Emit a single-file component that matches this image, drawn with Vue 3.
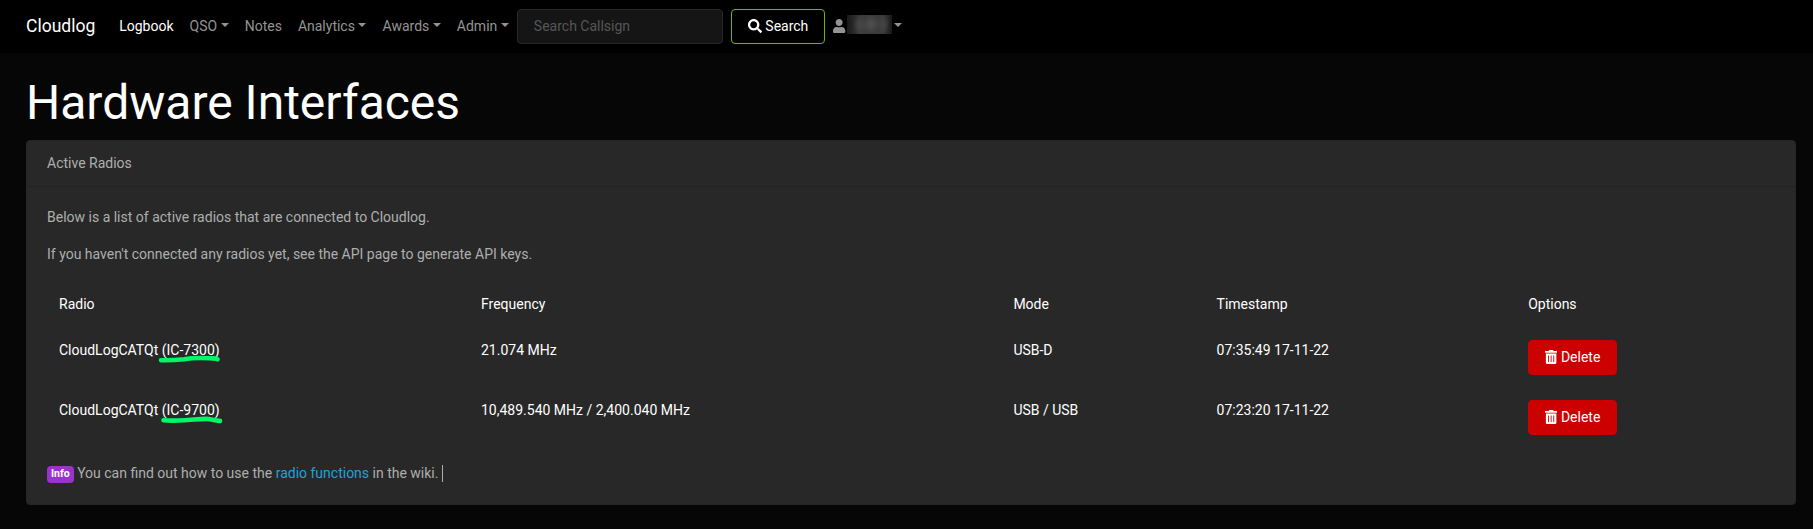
<script setup>
const links = [
  { label: 'Logbook', active: true },
  { label: 'QSO', menu: true },
  { label: 'Notes' },
  { label: 'Analytics', menu: true },
  { label: 'Awards', menu: true },
  { label: 'Admin', menu: true },
]
const radios = [
  {
    name: 'CloudLogCATQt',
    model: '(IC-7300)',
    frequency: '21.074 MHz',
    mode: 'USB-D',
    time: '07:35:49 17-11-22',
    mark: 'M3 6.2 C12 6.500 19 6 26 5.200 C34 3.800 44 3.900 52 4.300 C55 4.500 58 4 59.500 5.200',
  },
  {
    name: 'CloudLogCATQt',
    model: '(IC-9700)',
    frequency: '10,489.540 MHz / 2,400.040 MHz',
    mode: 'USB / USB',
    time: '07:23:20 17-11-22',
    mark: 'M5.5 6.200 C14 7.100 22 6.400 30 6 C37 5.600 45 4.500 51 5 C54 5.600 57 6.600 62 6.900',
  },
]
</script>

<template>
  <div class="page">
    <nav class="navbar">
      <a class="brand">Cloudlog</a>
      <a v-for="l in links" :key="l.label" class="link" :class="{ active: l.active, menu: l.menu }">{{ l.label }}</a>
      <input class="search" type="text" placeholder="Search Callsign" />
      <button class="btn btn-search">
        <svg class="icon" viewBox="0 0 512 512"><path d="M505 442.7L405.3 343c-4.500-4.500-10.600-7-17-7H372c27.600-35.300 44-79.700 44-128C416 93.100 322.900 0 208 0S0 93.100 0 208s93.100 208 208 208c48.300 0 92.700-16.400 128-44v16.300c0 6.400 2.500 12.500 7 17l99.700 99.700c9.400 9.400 24.600 9.400 33.900 0l28.300-28.300c9.400-9.400 9.400-24.600.1-34zM208 336c-70.700 0-128-57.200-128-128 0-70.700 57.200-128 128-128 70.700 0 128 57.200 128 128 0 70.700-57.200 128-128 128z" /></svg>
        Search
      </button>
      <a class="link user menu">
        <svg class="icon narrow" viewBox="0 0 448 512"><path d="M224 256c70.700 0 128-57.300 128-128S294.700 0 224 0 96 57.300 96 128s57.300 128 128 128zm89.600 32h-16.700c-22.200 10.200-46.900 16-72.900 16s-50.600-5.800-72.900-16h-16.700C60.200 288 0 348.200 0 422.400V464c0 26.500 21.500 48 48 48h352c26.500 0 48-21.500 48-48v-41.600c0-74.200-60.200-134.400-134.400-134.400z" /></svg>
        <span class="redacted"></span>
      </a>
    </nav>

    <main class="container">
      <h1>Hardware Interfaces</h1>
      <section class="card">
        <header class="card-header">Active Radios</header>
        <div class="card-body">
          <p>Below is a list of active radios that are connected to Cloudlog.</p>
          <p>If you haven't connected any radios yet, see the API page to generate API keys.</p>
          <div class="table">
            <div class="row">
              <span>Radio</span><span>Frequency</span><span>Mode</span><span>Timestamp</span><span>Options</span>
            </div>
            <div v-for="r in radios" :key="r.model" class="row">
              <span>{{ r.name }} <span class="model">{{ r.model }}<svg class="mark" viewBox="0 0 66 11"><path :d="r.mark" /></svg></span></span>
              <span>{{ r.frequency }}</span>
              <span>{{ r.mode }}</span>
              <span>{{ r.time }}</span>
              <span>
                <button class="btn btn-delete">
                  <svg class="icon narrow" viewBox="0 0 448 512"><path d="M32 464a48 48 0 0 0 48 48h288a48 48 0 0 0 48-48V128H32zm272-256a16 16 0 0 1 32 0v224a16 16 0 0 1-32 0zm-96 0a16 16 0 0 1 32 0v224a16 16 0 0 1-32 0zm-96 0a16 16 0 0 1 32 0v224a16 16 0 0 1-32 0zM432 32H312l-9.400-18.700A24 24 0 0 0 281.100 0H166.800a23.700 23.700 0 0 0-21.400 13.300L136 32H16A16 16 0 0 0 0 48v32a16 16 0 0 0 16 16h416a16 16 0 0 0 16-16V48a16 16 0 0 0-16-16z" /></svg>
                  Delete
                </button>
              </span>
            </div>
          </div>
          <p class="note"><span class="badge">Info</span> You can find out how to use the <a class="wiki">radio functions</a> in the wiki. <span class="caret"></span></p>
        </div>
      </section>
    </main>
  </div>
</template>

<style>
body {
  margin: 0;
  background: #060606;
}
</style>

<style scoped>
* {
  box-sizing: border-box;
}
.page {
  height: 529px;
  overflow: hidden;
  font: 14px/21px Roboto, sans-serif;
  color: #adafae;
}
.navbar {
  display: flex;
  align-items: center;
  height: 53px;
  padding-left: 26px;
  background: #000;
}
.brand {
  margin-right: 16px;
  margin-bottom: 1px;
  font-size: 17.5px;
  line-height: 26px;
  color: #fff;
}
.link {
  padding: 0 8px;
  color: #949494;
  white-space: nowrap;
}
.active {
  color: #fff;
}
.menu::after {
  content: '';
  display: inline-block;
  margin-left: 3.57px;
  vertical-align: 3.57px;
  border-top: 4.2px solid;
  border-left: 4.2px solid transparent;
  border-right: 4.2px solid transparent;
}
.search {
  width: 206px;
  height: 35px;
  margin-right: 8px;
  padding: 5px 16px 7px;
  border: 1px solid #282828;
  border-radius: 4px;
  background: #151515;
  font: inherit;
}
.search::placeholder {
  color: #555;
}
.btn {
  height: 35px;
  padding: 6px 16px;
  border: 1px solid;
  border-radius: 4px;
  font: inherit;
  color: #fff;
  white-space: nowrap;
}
.btn-search {
  background: #000;
  border-color: #77b300;
}
.btn-delete {
  display: block;
  background: #c00;
  border-color: #c00;
}
.icon {
  width: 14px;
  height: 14px;
  vertical-align: -1.75px;
  fill: currentColor;
}
.narrow {
  width: 12.25px;
}
.user {
  display: flex;
  align-items: center;
}
.user .icon {
  margin-bottom: 2px;
}
.user::after {
  margin-left: 2px;
  margin-bottom: 3px;
}
.redacted {
  width: 45px;
  height: 19px;
  margin: 0 0 4px 1.5px;
  background:
    radial-gradient(ellipse 7px 10px at 13px 10px, #484848, transparent),
    radial-gradient(ellipse 9px 10px at 24px 9px, #505050, transparent),
    radial-gradient(ellipse 7px 10px at 36px 9px, #454545, transparent),
    linear-gradient(90deg, #181818, #3b3b3b 30%, #3a3a3a 80%, #191919);
}
.container {
  padding: 21px 17px 0 26px;
}
h1 {
  margin: 0 0 8px;
  font-size: 48px;
  line-height: 58px;
  font-weight: 400;
  color: #fff;
}
.card {
  border: 1px solid #252525;
  border-radius: 4px;
  background: #282828;
}
.card-header {
  height: 46px;
  padding: 12px 20px;
  border-bottom: 1px solid #222;
}
.card-body {
  padding: 20px;
}
p {
  margin: 0 0 16px;
}
.table {
  margin-bottom: 16px;
  color: #fff;
}
.row {
  display: grid;
  grid-template-columns: 422px 532.4px 203.2px 311.6px 1fr;
  padding: 13px 12px 12px;
}
.model {
  position: relative;
}
.mark {
  position: absolute;
  left: -4px;
  top: 12px;
  width: 66px;
  height: 11px;
  fill: none;
  stroke: #00f866;
  stroke-width: 4.6;
  stroke-linecap: round;
  stroke-linejoin: round;
}
.note {
  height: 21px;
  margin: 0;
}
.badge {
  position: relative;
  top: -1px;
  display: inline-block;
  padding: 3px 4px;
  border-radius: 4px;
  background: #93c;
  font-size: 10.5px;
  line-height: 10.5px;
  font-weight: 700;
  color: #fff;
  vertical-align: baseline;
}
.wiki {
  color: #2a9fd6;
}
.caret {
  display: inline-block;
  width: 1px;
  height: 17px;
  background: #adafae;
  vertical-align: -4px;
}
</style>
